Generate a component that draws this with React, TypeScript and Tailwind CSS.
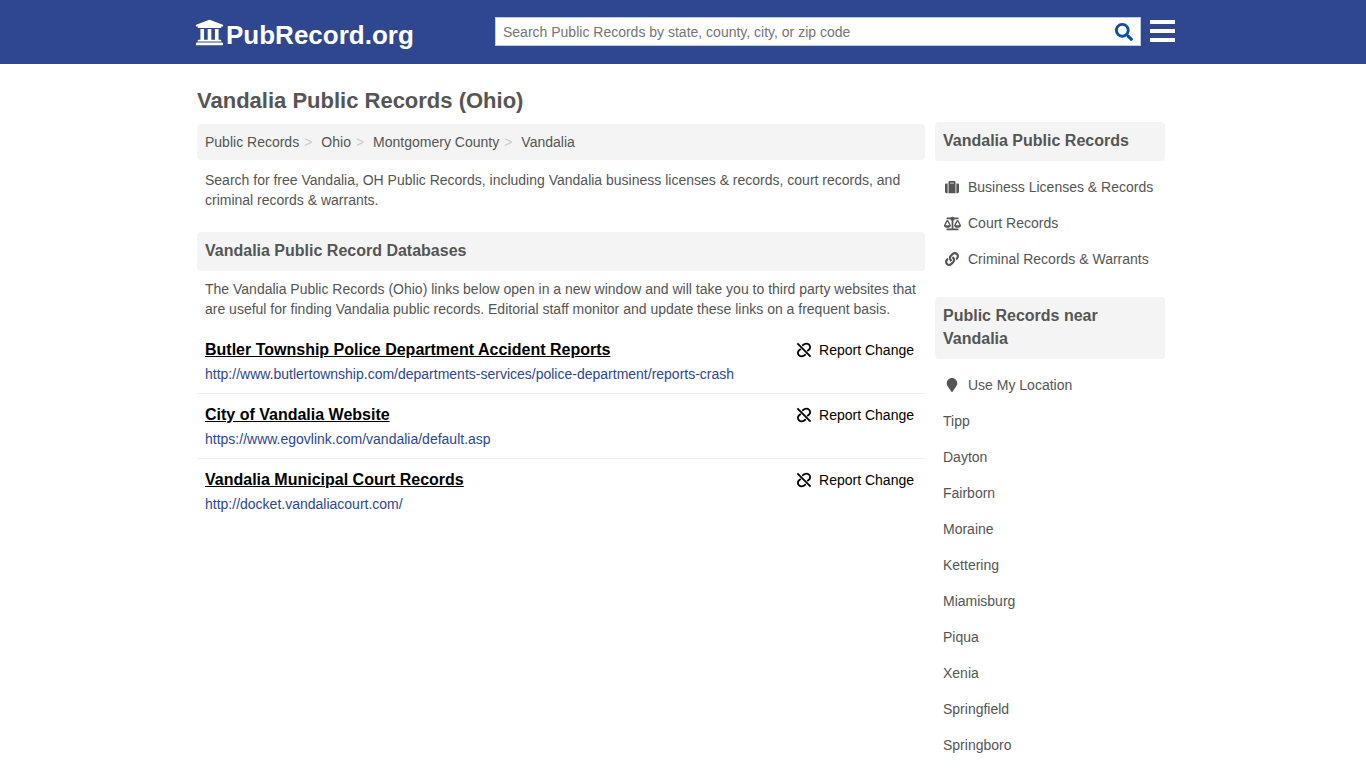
import {
  FaBalanceScale,
  FaLink,
  FaMapMarker,
  FaSearch,
  FaSuitcase,
  FaUniversity,
} from "react-icons/fa";

type RecordLink = {
  title: string;
  url: string;
};

const breadcrumbs = ["Public Records", "Ohio", "Montgomery County", "Vandalia"];

const databases: RecordLink[] = [
  {
    title: "Butler Township Police Department Accident Reports",
    url: "http://www.butlertownship.com/departments-services/police-department/reports-crash",
  },
  {
    title: "City of Vandalia Website",
    url: "https://www.egovlink.com/vandalia/default.asp",
  },
  {
    title: "Vandalia Municipal Court Records",
    url: "http://docket.vandaliacourt.com/",
  },
];

const categories = [
  { name: "Business Licenses & Records", icon: <FaSuitcase size={14} /> },
  { name: "Court Records", icon: <FaBalanceScale size={17} /> },
  { name: "Criminal Records & Warrants", icon: <FaLink size={14} /> },
];

const nearby = [
  "Tipp",
  "Dayton",
  "Fairborn",
  "Moraine",
  "Kettering",
  "Miamisburg",
  "Piqua",
  "Xenia",
  "Springfield",
  "Springboro",
];

// Broken chain link: two open loops with a slash through them
const UnlinkIcon = () => (
  <svg width="14" height="14" viewBox="0 0 14 14" fill="none" stroke="currentColor" strokeWidth="1.8" className="overflow-visible">
    <path d="M0.4 0.4 13.6 13.6" />
    <path d="M5.2 2.8 6.8 1.6C8.4 0.5 10.6 0.4 12 1.7c1.5 1.4 1.4 3.6.1 4.8L10.2 8.2" />
    <path d="M8.8 11.2 7.2 12.4C5.6 13.5 3.4 13.6 2 12.3c-1.5-1.4-1.4-3.6-.1-4.8L3.8 5.8" />
  </svg>
);

const Header = () => (
  <header className="bg-[#2e478f]">
    <div className="mx-auto flex h-16 max-w-[984px] items-center pb-[2px] pl-1">
      <a href="#" className="flex w-[300px] shrink-0 items-center gap-[2px] pt-[10px] text-[26px] font-bold text-white">
        <FaUniversity size={29} className="mb-[7px]" />
        PubRecord.org
      </a>
      <form className="flex h-[29px] flex-1 items-center border border-[#b8cdf0] bg-white">
        <input
          type="text"
          aria-label="Search Public Records"
          placeholder="Search Public Records by state, county, city, or zip code"
          className="min-w-0 flex-1 px-[7px] pt-[2px] text-sm text-[#555] outline-none placeholder:text-[#757575]"
        />
        <button type="button" aria-label="Search" className="px-[7px] pt-[2px] text-[#0b4ea2]">
          <FaSearch size={18} />
        </button>
      </form>
      <button type="button" aria-label="Menu" className="ml-[9px] flex w-[25px] flex-col gap-[5px]">
        <span className="h-1 w-full bg-white" />
        <span className="h-1 w-full bg-white" />
        <span className="h-1 w-full bg-white" />
      </button>
    </div>
  </header>
);

const SectionTitle = ({ children }: { children: string }) => (
  <h2 className="rounded-sm bg-[#f4f4f4] px-2 pt-[7px] pb-[9px] text-base leading-[23px] font-bold">
    {children}
  </h2>
);

const App = () => {
  return (
    <div className="bg-white font-['Liberation_Sans',Arial,sans-serif] text-sm text-[#555]">
      <Header />

      <div className="mx-auto flex max-w-[984px] gap-[10px] pr-[10px] pl-[6px]">
        <main className="min-w-0 flex-1 pt-[22px]">
          <h1 className="mb-2 text-[22px] leading-[30px] font-bold">Vandalia Public Records (Ohio)</h1>

          <nav aria-label="Breadcrumb" className="rounded-sm bg-[#f4f4f4] p-2">
            <ol className="flex gap-[9px]">
              {breadcrumbs.map((crumb, i) => (
                <li key={crumb} className="flex gap-[5px]">
                  <a href="#">{crumb}</a>
                  {i < breadcrumbs.length - 1 && <span className="text-[#ccc]">&gt;</span>}
                </li>
              ))}
            </ol>
          </nav>

          <p className="mt-[10px] mb-[22px] px-2">
            Search for free Vandalia, OH Public Records, including Vandalia business licenses &amp; records, court
            records, and criminal records &amp; warrants.
          </p>

          <SectionTitle>Vandalia Public Record Databases</SectionTitle>
          <p className="mt-2 mb-[10px] px-2">
            The Vandalia Public Records (Ohio) links below open in a new window and will take you to third party
            websites that are useful for finding Vandalia public records. Editorial staff monitor and update these
            links on a frequent basis.
          </p>

          <ul className="divide-y divide-[#eee]">
            {databases.map((db) => (
              <li key={db.url} className="flex items-start justify-between pt-[9px] pr-[11px] pb-[9px] pl-2">
                <div>
                  <a href={db.url} className="block text-base font-bold text-black underline">
                    {db.title}
                  </a>
                  <a href={db.url} className="block pt-[2px] text-[#2e478f]">
                    {db.url}
                  </a>
                </div>
                <button type="button" className="flex items-center gap-2 pt-[2px] text-black">
                  <UnlinkIcon />
                  Report Change
                </button>
              </li>
            ))}
          </ul>
        </main>

        <aside className="w-[230px] shrink-0 pt-[58px]">
          <SectionTitle>Vandalia Public Records</SectionTitle>
          <ul className="mt-2 mb-5">
            {categories.map((category) => (
              <li key={category.name}>
                <a href="#" className="flex items-center py-2 pl-2">
                  <span className="mr-[7px] flex w-[18px] justify-center">{category.icon}</span>
                  {category.name}
                </a>
              </li>
            ))}
          </ul>

          <SectionTitle>Public Records near Vandalia</SectionTitle>
          <ul className="mt-2">
            <li>
              <a href="#" className="flex items-center py-2 pl-2">
                <span className="mr-[7px] flex w-[18px] justify-center">
                  <FaMapMarker size={14} />
                </span>
                Use My Location
              </a>
            </li>
            {nearby.map((city) => (
              <li key={city}>
                <a href="#" className="block p-2">
                  {city}
                </a>
              </li>
            ))}
          </ul>
        </aside>
      </div>
    </div>
  );
};

export default App;
